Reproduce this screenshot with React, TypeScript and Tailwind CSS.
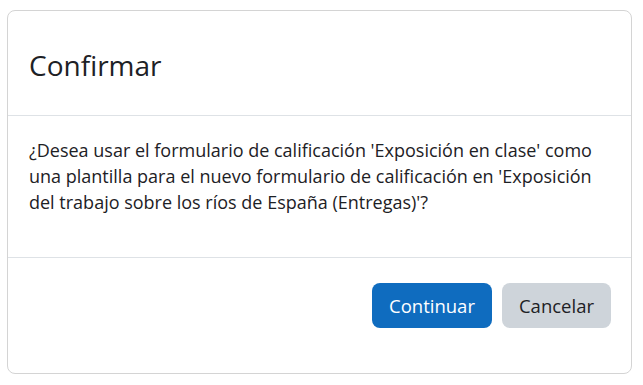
export default function App() {
  return (
    <div className="min-h-[385px] w-full bg-white pt-[10px] pl-[7px] font-['Open_Sans',sans-serif] text-[#1d2125]">
      <div className="w-[625px] rounded-lg border border-[#d4d4d4] bg-white">
        {/* Header */}
        <div className="flex h-[105px] items-center border-b border-[#dee2e6] px-[21px] pt-[4px]">
          <h5 className="text-[28px] leading-[34px] font-medium">Confirmar</h5>
        </div>

        {/* Body */}
        <div className="px-[21px] pt-[21px] pb-[21px]">
          <p className="mb-[21px] text-[18px] leading-[26px]">
            ¿Desea usar el formulario de calificación 'Exposición en clase' como una plantilla para el nuevo formulario de calificación en 'Exposición del trabajo sobre los ríos de España (Entregas)'?
          </p>
        </div>

        {/* Footer */}
        <div className="flex justify-end gap-[10px] border-t border-[#dee2e6] px-[20px] pt-[25px] pb-[45px]">
          <button className="h-[45px] rounded-lg bg-[#0f6cbf] px-[17px] text-[18.5px] text-white">
            Continuar
          </button>
          <button className="h-[45px] rounded-lg bg-[#ced4da] px-[17px] text-[18.5px] text-[#1d2125]">
            Cancelar
          </button>
        </div>
      </div>
    </div>
  )
}
